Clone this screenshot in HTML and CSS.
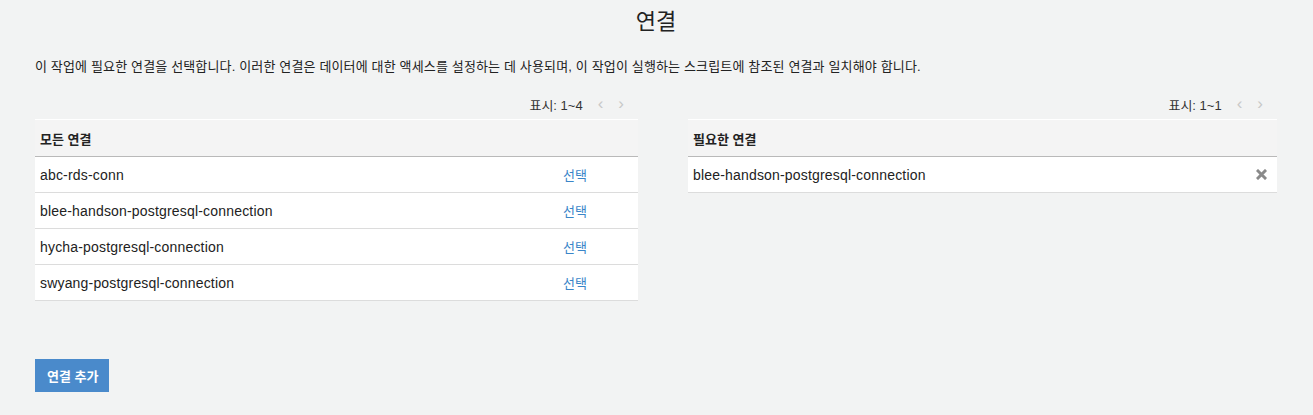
FILE: index.html
```html
<!DOCTYPE html>
<html lang="ko">
<head>
<meta charset="utf-8">
<title>연결</title>
<link rel="stylesheet" href="styles.css">
</head>
<body>
<div class="page">
  <h1 class="title">연결</h1>
  <p class="desc">이 작업에 필요한 연결을 선택합니다. 이러한 연결은 데이터에 대한 액세스를 설정하는 데 사용되며, 이 작업이 실행하는 스크립트에 참조된 연결과 일치해야 합니다.</p>
  <div class="columns">
    <section class="panel panel-left">
      <div class="pager"><span>표시: 1~4</span><span class="arrow">&lsaquo;</span><span class="arrow">&rsaquo;</span></div>
      <div class="table">
        <div class="thead">모든 연결</div>
        <div class="row"><span class="name">abc-rds-conn</span><a class="select">선택</a></div>
        <div class="row"><span class="name">blee-handson-postgresql-connection</span><a class="select">선택</a></div>
        <div class="row"><span class="name">hycha-postgresql-connection</span><a class="select">선택</a></div>
        <div class="row"><span class="name">swyang-postgresql-connection</span><a class="select">선택</a></div>
      </div>
    </section>
    <section class="panel panel-right">
      <div class="pager"><span>표시: 1~1</span><span class="arrow">&lsaquo;</span><span class="arrow">&rsaquo;</span></div>
      <div class="table">
        <div class="thead">필요한 연결</div>
        <div class="row"><span class="name">blee-handson-postgresql-connection</span>
          <svg class="remove" width="11" height="11" viewBox="0 0 11 11"><path d="M2 2 L9 9 M9 2 L2 9" stroke="#8a8a8a" stroke-width="3" stroke-linecap="square"/></svg>
        </div>
      </div>
    </section>
  </div>
  <button class="add-btn">연결 추가</button>
</div>
</body>
</html>
```
FILE: styles.css
```css
html, body {
  margin: 0;
  padding: 0;
}
body {
  background: #f2f3f3;
  font-family: "Liberation Sans", "Noto Sans CJK KR", sans-serif;
  color: #222;
}
.page {
  padding: 0 36px 0 35px;
}
.title {
  margin: 0;
  padding-top: 4px;
  text-align: center;
  font-weight: normal;
  font-size: 22px;
  line-height: 30px;
  color: #222;
  font-family: "Noto Sans CJK KR", "Liberation Sans", sans-serif;
}
.desc {
  margin: 23px 0 0;
  font-size: 13px;
  letter-spacing: 0.15px;
  line-height: 20px;
  color: #222;
}
.columns {
  display: grid;
  grid-template-columns: 603px 589px;
  column-gap: 50px;
  margin-top: 18px;
}
.pager {
  display: flex;
  justify-content: flex-end;
  align-items: center;
  height: 18px;
  font-size: 13px;
  color: #333;
  padding-right: 14px;
  margin-bottom: 6px;
}
.pager .arrow {
  color: #c8c8c8;
  font-size: 17px;
  line-height: 18px;
  margin-left: 15px;
}
.table {
  border-top: 1px solid #fff;
}
.thead {
  height: 36px;
  display: flex;
  align-items: center;
  padding-left: 5px;
  font-size: 13px;
  font-weight: bold;
  background: #f4f4f4;
  border-bottom: 1px solid #b9b9b9;
}
.row {
  height: 35px;
  display: flex;
  align-items: center;
  padding-left: 5px;
  background: #fff;
  border-bottom: 1px solid #dcdcdc;
  font-size: 14px;
  letter-spacing: 0.18px;
}
.name {
  flex: 1;
}
.select {
  color: #3a85c8;
  font-size: 13px;
  letter-spacing: 0;
  margin-right: 51px;
  cursor: pointer;
}
.remove {
  margin-right: 10px;
}
.add-btn {
  margin-top: 58px;
  height: 33px;
  padding: 0 11px 0 12px;
  border: none;
  background: #4a8acb;
  color: #fff;
  font-family: "Noto Sans CJK KR", "Liberation Sans", sans-serif;
  font-size: 13px;
  font-weight: bold;
}
```
